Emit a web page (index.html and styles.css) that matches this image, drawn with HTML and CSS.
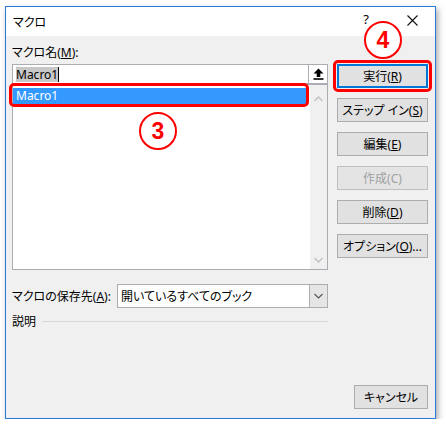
FILE: index.html
```html
<!DOCTYPE html>
<html lang="ja">
<head>
    <meta charset="UTF-8">
    <title>マクロ</title>
    <link rel="stylesheet" href="styles.css">
</head>
<body>
    <div class="window">
        <!-- Title bar -->
        <div class="titlebar">
            <span class="title">マクロ</span>
            <span class="help">?</span>
            <span class="close">
                <svg width="11" height="11" viewBox="0 0 11 11"><path d="M0.5 0.5 L10.5 10.5 M10.5 0.5 L0.5 10.5" stroke="#111" stroke-width="1.1" fill="none"/></svg>
            </span>
        </div>

        <div class="content">
            <div class="main">
                <div class="left">
                    <div class="label">マクロ名(<u>M</u>):</div>
                    <div class="name-box">
                        <span class="name-text"><span class="sel">Macro1</span><span class="caret"></span></span>
                        <span class="up-btn">
                            <svg width="11" height="12" viewBox="0 0 11 12"><path d="M5.5 0.5 L10.5 5.5 L7.3 5.5 L7.3 9 L3.7 9 L3.7 5.5 L0.5 5.5 Z" fill="#000"/><rect x="0.5" y="10.2" width="10" height="1.6" fill="#000"/></svg>
                        </span>
                    </div>
                    <div class="list">
                        <div class="items">
                            <div class="item selected">Macro1</div>
                        </div>
                        <div class="scrollbar">
                            <svg width="9" height="6" viewBox="0 0 9 6"><path d="M0.5 5 L4.5 1 L8.5 5" stroke="#c2c2c2" stroke-width="1.4" fill="none"/></svg>
                            <svg width="9" height="6" viewBox="0 0 9 6"><path d="M0.5 1 L4.5 5 L8.5 1" stroke="#c2c2c2" stroke-width="1.4" fill="none"/></svg>
                        </div>
                    </div>
                </div>

                <div class="buttons">
                    <button class="btn default">実行(<u>R</u>)</button>
                    <button class="btn">ステップ イン(<u>S</u>)</button>
                    <button class="btn">編集(<u>E</u>)</button>
                    <button class="btn" disabled>作成(C)</button>
                    <button class="btn">削除(<u>D</u>)</button>
                    <button class="btn">オプション(<u>O</u>)...</button>
                </div>
            </div>

            <div class="store-row">
                <span class="store-label">マクロの保存先(<u>A</u>):</span>
                <div class="combo">
                    <span class="combo-text">開いているすべてのブック</span>
                    <span class="combo-btn">
                        <svg width="9" height="6" viewBox="0 0 9 6"><path d="M0.5 1 L4.5 5 L8.5 1" stroke="#555" stroke-width="1.1" fill="none"/></svg>
                    </span>
                </div>
            </div>

            <div class="desc-row">
                <span>説明</span>
                <span class="rule"></span>
            </div>

            <div class="footer">
                <button class="btn cancel">キャンセル</button>
            </div>
        </div>

        <!-- annotations -->
        <div class="mark row-mark"></div>
        <div class="mark run-mark"></div>
        <div class="badge badge-3">3</div>
        <div class="badge badge-4">4</div>
    </div>
</body>
</html>
```

FILE: styles.css
```css
* {
    box-sizing: border-box;
    margin: 0;
    padding: 0;
}

body {
    background-color: #fff;
    font-family: "Noto Sans", "Noto Sans CJK JP", sans-serif;
    font-size: 12px;
    font-feature-settings: "palt";
    color: #000;
}

.window {
    position: relative;
    margin: 6px 0 0 5px;
    width: 431px;
    height: 413px;
    border: 1px solid #2a7bd5;
    background-color: #f0f0f0;
    box-shadow: 2px 3px 6px rgba(0, 0, 0, 0.35);
    display: flex;
    flex-direction: column;
}

.titlebar {
    height: 29px;
    background-color: #fff;
    display: flex;
    align-items: center;
    padding-left: 7px;
}

.title {
    font-size: 12px;
}

.help {
    margin-left: auto;
    width: 20px;
    text-align: center;
    font-size: 13px;
    margin-top: -6px;
}

.close {
    width: 46px;
    margin-left: 13px;
    display: flex;
    justify-content: center;
    margin-top: -3px;
}

.content {
    flex: 1;
    display: flex;
    flex-direction: column;
    padding: 9px 7px 9px 6px;
}

.main {
    display: flex;
    gap: 9px;
}

.left {
    width: 316px;
}

.label {
    line-height: 16px;
}

.name-box {
    margin-top: 3px;
    height: 20px;
    background-color: #fff;
    border: 1px solid #abadb3;
    display: flex;
    align-items: center;
}

.name-text {
    flex: 1;
    padding-left: 3px;
    display: flex;
    align-items: center;
    font-size: 12px;
}

.sel {
    background-color: #c8c8c8;
    line-height: 15px;
}

.caret {
    width: 1px;
    height: 15px;
    background-color: #000;
}

.up-btn {
    width: 19px;
    height: 18px;
    border-left: 1px solid #abadb3;
    display: flex;
    align-items: center;
    justify-content: center;
}

.list {
    height: 186px;
    background-color: #fff;
    border: 1px solid #abadb3;
    display: flex;
}

.items {
    flex: 1;
    padding: 3px 2px 0 0;
}

.item {
    height: 16px;
    line-height: 16px;
    padding-left: 3px;
}

.item.selected {
    background-color: #3399ff;
    color: #fff;
}

.scrollbar {
    width: 17px;
    background-color: #f0f0f0;
    display: flex;
    flex-direction: column;
    justify-content: space-between;
    align-items: center;
    padding: 11px 0 6px;
}

.buttons {
    width: 91px;
    margin-top: 19px;
    display: flex;
    flex-direction: column;
    gap: 10px;
}

.btn {
    height: 24px;
    padding: 0;
    background-color: #e1e1e1;
    border: 1px solid #adadad;
    font-family: "Noto Sans", "Noto Sans CJK JP", sans-serif;
    font-size: 12px;
    font-feature-settings: "palt";
    color: #000;
}

.btn.default {
    border: 2px solid #0078d7;
}

.btn:disabled {
    color: #a0a0a0;
    border-color: #bfbfbf;
    background-color: #e4e4e4;
}

.store-row {
    margin-top: 14px;
    display: flex;
    align-items: center;
}

.store-label {
    width: 105px;
}

.combo {
    width: 211px;
    height: 24px;
    background-color: #fff;
    border: 1px solid #abadb3;
    display: flex;
    align-items: center;
}

.combo-text {
    flex: 1;
    padding-left: 3px;
}

.combo-btn {
    width: 18px;
    height: 22px;
    background-color: #e5e5e5;
    border-left: 1px solid #abadb3;
    display: flex;
    align-items: center;
    justify-content: center;
}

.desc-row {
    margin-top: 5px;
    height: 16px;
    width: 316px;
    display: flex;
    align-items: center;
    gap: 6px;
}

.rule {
    flex: 1;
    height: 1px;
    background-color: #d8d8d8;
}

.footer {
    margin-top: auto;
    display: flex;
    justify-content: flex-end;
}

.cancel {
    width: 74px;
}

.mark {
    position: absolute;
    border: 3px solid #ff0000;
    border-radius: 5px;
}

.row-mark {
    left: 3px;
    top: 76px;
    width: 300px;
    height: 24px;
}

.run-mark {
    left: 327px;
    top: 53px;
    width: 99px;
    height: 32px;
}

.badge {
    position: absolute;
    width: 38px;
    height: 38px;
    border: 2.5px solid #ff0000;
    border-radius: 50%;
    background-color: #fff;
    color: #ff0000;
    font-family: "Liberation Sans", Arial, sans-serif;
    font-weight: bold;
    font-size: 23px;
    display: flex;
    align-items: center;
    justify-content: center;
}

.badge-3 {
    left: 133px;
    top: 105px;
}

.badge-4 {
    left: 358px;
    top: 14px;
}
```
